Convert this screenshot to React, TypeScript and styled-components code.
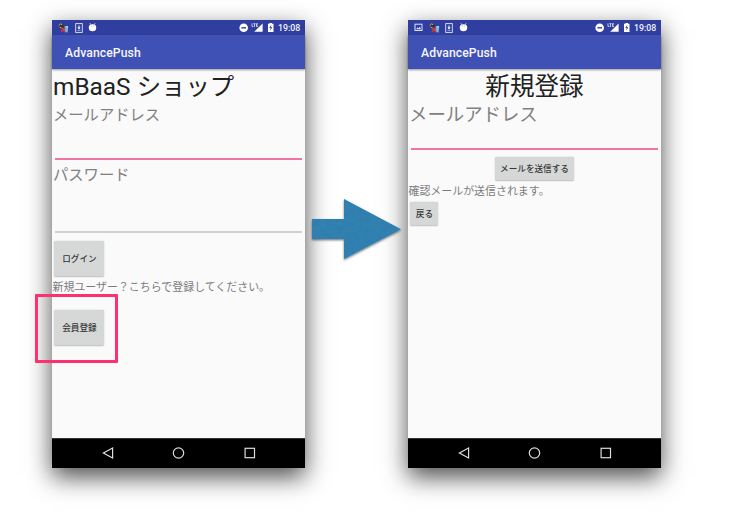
import React from "react";
import styled, { createGlobalStyle } from "styled-components";

const GlobalStyle = createGlobalStyle`
  body { margin: 0; background: #fff; }
  * { box-sizing: border-box; }
`;

const Page = styled.main`
  display: flex;
  width: 743px;
  height: 522px;
  padding: 20px 0 0 52px;
  overflow: hidden;
  background: #fff;
  font-family: Roboto, "Noto Sans CJK JP", sans-serif;
`;

const Phone = styled.section`
  position: relative;
  flex: none;
  display: flex;
  flex-direction: column;
  width: 253px;
  height: 448px;
  background: #fafafa;
  box-shadow: 0 9px 23px rgba(0, 0, 0, 0.7);
`;

const StatusBar = styled.header`
  display: flex;
  flex: none;
  align-items: center;
  justify-content: space-between;
  height: 15px;
  padding: 0 5px 0 6px;
  background: #303f9f;
`;

const IconGroup = styled.div<{ $gap: number }>`
  display: flex;
  align-items: center;
  gap: ${(p) => p.$gap}px;
  svg { display: block; }
`;

const Clock = styled.span`
  padding-top: 1px;
  color: #f3f4fb;
  font-size: 8.8px;
  font-weight: 500;
  line-height: 15px;
  width: 22px;
  white-space: nowrap;
`;

const AppBar = styled.div`
  flex: none;
  height: 34px;
  padding: 1px 0 0 13px;
  background: #3f51b5;
  box-shadow: 0 1px 2px rgba(0, 0, 0, 0.4);
  color: #f6f7fc;
  font-size: 12.2px;
  font-weight: 500;
  line-height: 35px;
  letter-spacing: 0.1px;
`;

const Content = styled.div`
  flex: 1;
  display: flex;
  flex-direction: column;
  align-items: flex-start;
`;

const Title = styled.h1<{ $centered?: boolean }>`
  margin: 0;
  padding: ${(p) => (p.$centered ? "1px 0 0" : "1px 0 0 1px")};
  width: 100%;
  height: 34px;
  color: #212121;
  font-size: ${(p) => (p.$centered ? 24.6 : 24.4)}px;
  font-weight: 400;
  line-height: 34px;
  white-space: nowrap;
  text-align: ${(p) => (p.$centered ? "center" : "left")};
`;

const Label = styled.label<{ $size: number; $height: number }>`
  padding-left: 1px;
  height: ${(p) => p.$height}px;
  color: #818181;
  font-size: ${(p) => p.$size}px;
  line-height: ${(p) => p.$height}px;
  white-space: nowrap;
`;

const PhoneLabel = styled(Label)`
  padding-top: 1px;
`;

const Field = styled.div<{ $height: number; $active?: boolean }>`
  align-self: stretch;
  height: ${(p) => p.$height}px;
  margin: 0 3px;
  border-bottom: 2px solid ${(p) => (p.$active ? "#f074a4" : "#d0d0d0")};
`;

const Note = styled.p<{ $top: number }>`
  margin: ${(p) => p.$top}px 0 0 0.5px;
  color: #7c7c7c;
  font-size: 10.95px;
  line-height: 16px;
  height: 16px;
  white-space: nowrap;
`;

const Button = styled.button<{ $w: number; $h: number; $top: number; $centered?: boolean }>`
  flex: none;
  align-self: ${(p) => (p.$centered ? "center" : "flex-start")};
  width: ${(p) => p.$w}px;
  height: ${(p) => p.$h}px;
  margin: ${(p) => p.$top}px 0 0 ${(p) => (p.$centered ? 0 : 2.4)}px;
  padding: 0;
  border: 0;
  border-radius: 1.5px;
  background: #d6d7d7;
  box-shadow: 0 0.5px 1.5px rgba(0, 0, 0, 0.25);
  color: #383838;
  font-family: inherit;
  font-size: 8.6px;
  font-weight: 500;
  line-height: 12px;
  white-space: nowrap;
`;

const NavBar = styled.nav`
  flex: none;
  display: flex;
  align-items: center;
  justify-content: space-between;
  height: 30px;
  padding: 0 49.5px 2px 49.5px;
  border-top: 1px solid #333;
  background: #000;
`;

const Highlight = styled.div`
  position: absolute;
  left: -17px;
  top: 274px;
  width: 83px;
  height: 69px;
  border: 3px solid #ff3070;
  border-radius: 1px;
`;

const ArrowSlot = styled.div`
  position: relative;
  z-index: 1;
  flex: none;
  width: 103px;
  padding: 176px 0 0 5px;
  svg { display: block; }
`;

const PictureIcon = () => (
  <svg width="9" height="9" viewBox="0 0 9 9">
    <rect x="1" y="1.2" width="7" height="6.3" fill="none" stroke="#dfe3f5" strokeWidth="1" />
    <path d="M2 6.3 3.6 4.4 4.6 5.3 5.8 3.8 7.1 6.3Z" fill="#dfe3f5" />
  </svg>
);

const CallIcon = () => (
  <svg width="11" height="10" viewBox="0 0 11 10">
    <path d="M.2 2.6 2.6 .4 5.2 1.6 5.8 4.3 3 5.6 1 4.6Z" fill="#30302c" />
    <path d="M.6 2.8 2.6 .9 4.2 1.6M1.6 4.2 3.2 4.6" fill="none" stroke="#c4c0a8" strokeWidth="1" />
    <path d="M6.6 3.2 10.3 3.8 9.6 9.4 6.5 8.9Z" fill="#6bbde3" />
    <path d="M7.3 3 10 3.3 9.7 4.8Z" fill="#e3eef0" />
    <path d="M3 4.4 7.2 8.9M6.8 4.7 3.2 8.5" stroke="#d53a38" strokeWidth="1.6" />
  </svg>
);

const DownloadIcon = () => (
  <svg width="8" height="10" viewBox="0 0 8 10">
    <rect x=".7" y=".6" width="6.6" height="8.8" fill="none" stroke="#dfe3f5" strokeWidth=".9" />
    <path d="M4 2.5V5.5" stroke="#fff" strokeWidth="1" />
    <path d="M2.3 4.6H5.7L4 6.4Z" fill="#fff" />
    <path d="M2.4 7.4H5.6" stroke="#dfe3f5" strokeWidth=".6" />
  </svg>
);

const AndroidIcon = () => (
  <svg width="9" height="9" viewBox="0 0 9 9">
    <path d="M2 .3 2.8 1.7M7 .3 6.2 1.7" stroke="#fff" strokeWidth=".8" />
    <path d="M.8 3.9Q1 1.3 4.5 1.3T8.2 3.9V5Q8 8.2 4.5 8.2T.8 5Z" fill="#fff" />
    <path d="M2.8 3H3.5M5.5 3H6.2" stroke="#6672b8" strokeWidth=".8" />
  </svg>
);

const SystemIcons = () => (
  <svg width="36" height="11" viewBox="0 0 36 11">
    <circle cx="4.7" cy="5.8" r="4.3" fill="#fff" />
    <path d="M2.4 5.8H7" stroke="#303f9f" strokeWidth="1.4" />
    <path d="M23.6 1.6V9.8H15.2Z" fill="#fff" />
    <path d="M13 1.4V4.5H14.5M14.4 1.7H16.6M15.5 1.7V4.8M19 1.7H17.5V4.5H19M17.5 3H18.8" fill="none" stroke="#e3e6f5" strokeWidth=".8" />
    <path d="M29 1.8H30.5V1H33V1.8H34.5V10H29Z" fill="#fff" />
    <path d="M32.3 2.7 30.3 6H31.7L31.2 8.8 33.3 5.2H31.9Z" fill="#303f9f" />
  </svg>
);

const BackIcon = () => (
  <svg width="12" height="14" viewBox="0 0 12 14">
    <path d="M1.4 7 10.6 2V12Z" fill="none" stroke="#dcdcdc" strokeWidth="1.2" />
  </svg>
);

const HomeIcon = () => (
  <svg width="13" height="14" viewBox="0 0 13 14">
    <circle cx="6.5" cy="7" r="5.2" fill="none" stroke="#dcdcdc" strokeWidth="1.2" />
  </svg>
);

const RecentIcon = () => (
  <svg width="12" height="14" viewBox="0 0 12 14">
    <rect x="1.1" y="2.3" width="9.4" height="9.4" fill="none" stroke="#dcdcdc" strokeWidth="1.2" />
  </svg>
);

const Arrow = () => (
  <svg width="98" height="68" viewBox="0 0 98 68">
    <defs>
      <filter id="arrowShadow" x="-10%" y="-10%" width="120%" height="130%">
        <feDropShadow dx="0" dy="1.2" stdDeviation="1" floodColor="#000" floodOpacity=".55" />
      </filter>
      <filter id="arrowTexture" x="0" y="0" width="100%" height="100%">
        <feTurbulence type="fractalNoise" baseFrequency=".18 .3" numOctaves="3" seed="4" />
        <feColorMatrix values="0 0 0 0 .05  0 0 0 0 .25  0 0 0 0 .4  .7 0 0 0 -.22" />
        <feComposite in2="SourceGraphic" operator="in" />
      </filter>
    </defs>
    <path d="M2 23H34V3L91 33.3 34 63V43H2Z" fill="#2f7eb0" filter="url(#arrowShadow)" />
    <path d="M2 23H34V3L91 33.3 34 63V43H2Z" fill="#2f7eb0" filter="url(#arrowTexture)" />
  </svg>
);

type DeviceProps = { picture?: boolean; children: React.ReactNode };

const Device = ({ picture, children }: DeviceProps) => (
  <Phone>
    <StatusBar>
      <IconGroup $gap={5.5}>
        {picture && <PictureIcon />}
        <CallIcon />
        <DownloadIcon />
        <AndroidIcon />
      </IconGroup>
      <IconGroup $gap={3}>
        <SystemIcons />
        <Clock>19:08</Clock>
      </IconGroup>
    </StatusBar>
    <AppBar>AdvancePush</AppBar>
    <Content>{children}</Content>
    <NavBar>
      <BackIcon />
      <HomeIcon />
      <RecentIcon />
    </NavBar>
  </Phone>
);

export default function App() {
  return (
    <>
      <GlobalStyle />
      <Page>
        <Device>
          <Title>mBaaS ショップ</Title>
          <PhoneLabel $size={15.3} $height={23}>メールアドレス</PhoneLabel>
          <Field $height={34} $active />
          <PhoneLabel $size={15.3} $height={28}>パスワード</PhoneLabel>
          <Field $height={45} />
          <Button $w={50} $h={35} $top={8}>ログイン</Button>
          <Note $top={4}>新規ユーザー？こちらで登録してください。</Note>
          <Button $w={50} $h={35} $top={14}>会員登録</Button>
          <Highlight />
        </Device>
        <ArrowSlot>
          <Arrow />
        </ArrowSlot>
        <Device picture>
          <Title $centered>新規登録</Title>
          <Label $size={18.4} $height={23}>メールアドレス</Label>
          <Field $height={24} $active />
          <Button $w={79} $h={23} $top={7} $centered>メールを送信する</Button>
          <Note $top={4}>確認メールが送信されます。</Note>
          <Button $w={28} $h={23} $top={2}>戻る</Button>
        </Device>
      </Page>
    </>
  );
}
